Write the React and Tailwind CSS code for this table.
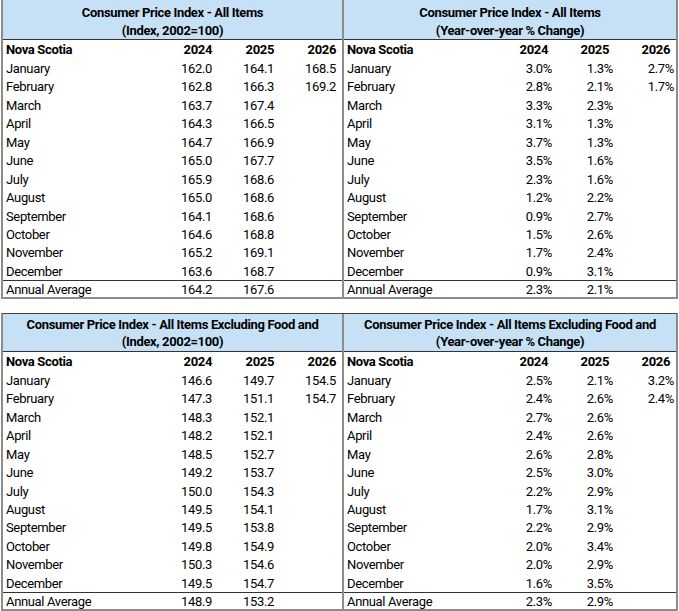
import React from "react";

const months = [
    "January", "February", "March", "April", "May", "June", "July",
    "August", "September", "October", "November", "December",
];

const tables = [
    {
        title: "Consumer Price Index - All Items",
        index: [
            ["162.0", "164.1", "168.5"], ["162.8", "166.3", "169.2"], ["163.7", "167.4"],
            ["164.3", "166.5"], ["164.7", "166.9"], ["165.0", "167.7"], ["165.9", "168.6"],
            ["165.0", "168.6"], ["164.1", "168.6"], ["164.6", "168.8"], ["165.2", "169.1"],
            ["163.6", "168.7"],
        ],
        indexAvg: ["164.2", "167.6"],
        pct: [
            ["3.0%", "1.3%", "2.7%"], ["2.8%", "2.1%", "1.7%"], ["3.3%", "2.3%"],
            ["3.1%", "1.3%"], ["3.7%", "1.3%"], ["3.5%", "1.6%"], ["2.3%", "1.6%"],
            ["1.2%", "2.2%"], ["0.9%", "2.7%"], ["1.5%", "2.6%"], ["1.7%", "2.4%"],
            ["0.9%", "3.1%"],
        ],
        pctAvg: ["2.3%", "2.1%"],
    },
    {
        title: "Consumer Price Index - All Items Excluding Food and",
        index: [
            ["146.6", "149.7", "154.5"], ["147.3", "151.1", "154.7"], ["148.3", "152.1"],
            ["148.2", "152.1"], ["148.5", "152.7"], ["149.2", "153.7"], ["150.0", "154.3"],
            ["149.5", "154.1"], ["149.5", "153.8"], ["149.8", "154.9"], ["150.3", "154.6"],
            ["149.5", "154.7"],
        ],
        indexAvg: ["148.9", "153.2"],
        pct: [
            ["2.5%", "2.1%", "3.2%"], ["2.4%", "2.6%", "2.4%"], ["2.7%", "2.6%"],
            ["2.4%", "2.6%"], ["2.6%", "2.8%"], ["2.5%", "3.0%"], ["2.2%", "2.9%"],
            ["1.7%", "3.1%"], ["2.2%", "2.9%"], ["2.0%", "3.4%"], ["2.0%", "2.9%"],
            ["1.6%", "3.5%"],
        ],
        pctAvg: ["2.3%", "2.9%"],
    },
];

const Row = ({ label, values = [], bold, pct, className = "" }) => (
    <div className={`flex items-center pt-[2px] ${className}`}>
        <div className={`flex-1 pl-[3px] ${bold ? "font-bold" : ""}`}>{label}</div>
        {[0, 1, 2].map((i) => (
            <div
                key={i}
                className={`text-right ${pct ? "w-[61px] pr-[2px]" : "w-[62px] pr-[6px]"} ${
                    bold ? "font-bold" : ""
                } ${bold && pct ? "pr-[6px]" : ""}`}
            >
                {values[i] || ""}
            </div>
        ))}
    </div>
);

const Panel = ({ title, subtitle, rows, avg, pct, first, className = "" }) => (
    <div className={`flex flex-col ${className}`}>
        {/* Header */}
        <div
            className={`bg-[#c6e0f5] border-b border-[#333] text-center font-bold ${
                first ? "h-[40px] pt-[4px] leading-[18.4px]" : "h-[38px] pt-[2px] leading-[17px]"
            }`}
        >
            <div>{title}</div>
            <div>{subtitle}</div>
        </div>
        <Row label="Nova Scotia" values={["2024", "2025", "2026"]} bold pct={pct} className="h-[18.46px]" />
        {months.map((m, i) => (
            <Row key={m} label={m} values={rows[i]} pct={pct} className="h-[18.46px]" />
        ))}
        <Row
            label="Annual Average"
            values={avg}
            pct={pct}
            className="h-[17px] border-t border-[#333]"
        />
    </div>
);

const Block = ({ data, first }) => (
    <div
        className={`flex w-[677px] ml-[1px] border-x-2 border-b-2 border-[#8c8c8c] ${
            first ? "" : "mt-[14px] border-t border-t-[#444]"
        }`}
    >
        <Panel
            title={data.title}
            subtitle="(Index, 2002=100)"
            rows={data.index}
            avg={data.indexAvg}
            first={first}
            className="w-[341px] border-r-2 border-[#8c8c8c]"
        />
        <Panel
            title={data.title}
            subtitle="(Year-over-year % Change)"
            rows={data.pct}
            avg={data.pctAvg}
            pct
            first={first}
            className="flex-1"
        />
    </div>
);

export default function App() {
    return (
        <div
            className="w-[679px] h-[611px] overflow-hidden bg-white text-[13px] tracking-[-0.35px] text-black"
            style={{ fontFamily: "Roboto, 'Liberation Sans', sans-serif" }}
        >
            <Block data={tables[0]} first />
            <Block data={tables[1]} />
        </div>
    );
}
